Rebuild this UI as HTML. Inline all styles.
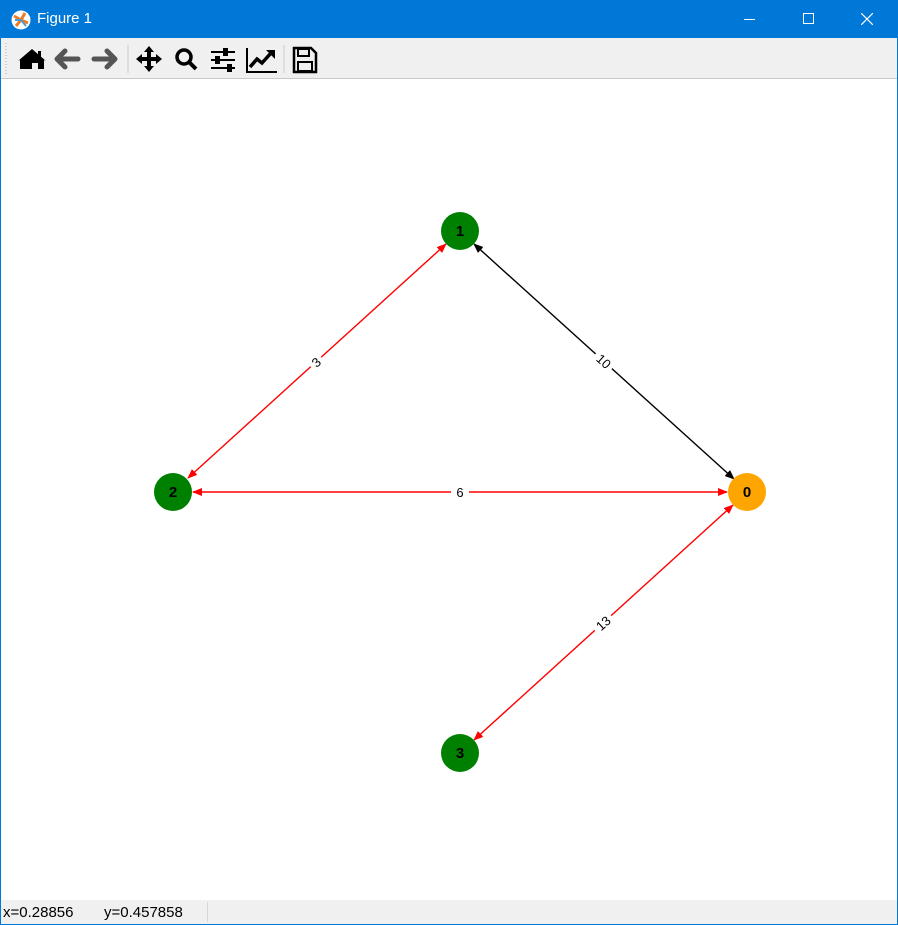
<!DOCTYPE html>
<html><head><style>
body{margin:0;width:898px;height:925px;overflow:hidden;font-family:"Liberation Sans","DejaVu Sans",sans-serif;}
.win{position:absolute;left:0;top:0;width:896px;height:923px;border:1px solid #0078d7;background:#fff;}
.title{position:absolute;left:0;top:0;width:896px;height:37px;background:#0078d7;color:#fff;font-size:15px;}
.tb{position:absolute;left:0;top:37px;width:896px;height:40px;background:#f0f0f0;border-bottom:1px solid #c8c8c8;}
.sb{position:absolute;left:0;top:899px;width:896px;height:24px;background:#f0f0f0;font-size:15px;}
</style></head><body>
<div class="win">
<div class="title">
<svg style="position:absolute;left:10px;top:9px" width="20" height="20" viewBox="0 0 20 20"><circle cx="10" cy="10" r="9.5" fill="#fff"/><path d="M10 10L3 6M10 10L5 16M10 10L14 3M10 10L17 13" stroke="#e87d2a" stroke-width="3"/><path d="M10 10L15 16M10 10L4 10" stroke="#4a9bd4" stroke-width="2"/></svg>
<span style="position:absolute;left:36px;top:9px">Figure 1</span>
<div style="position:absolute;left:743px;top:18px;width:11px;height:1px;background:#fff"></div>
<div style="position:absolute;left:802px;top:12px;width:9px;height:9px;border:1px solid #fff"></div>
<svg style="position:absolute;left:860px;top:12px" width="12" height="12"><path d="M0 0L12 12M12 0L0 12" stroke="#fff" stroke-width="1.2"/></svg>
</div>
<div class="tb">
<svg width="330" height="40">
<path d="M5 5v32" stroke="#aaa" stroke-width="1" stroke-dasharray="1,2"/>
<path d="M19 31v-9l-2 1 14-12 14 12-2-1v9h-6v-6h-6v6z M37 13h3v6l-3-3z" fill="#000"/>
<path d="M64 13l-8 8 8 8M57 21h20" stroke="#555" stroke-width="5" fill="none" stroke-linecap="round" stroke-linejoin="round"/>
<path d="M106 13l8 8-8 8M113 21h-20" stroke="#555" stroke-width="5" fill="none" stroke-linecap="round" stroke-linejoin="round"/>
<path d="M127 7v28" stroke="#ccc"/>
<path d="M148 8l-5 6h3v5h-5v-3l-6 5 6 5v-3h5v5h-3l5 6 5-6h-3v-5h5v3l6-5-6-5v3h-5v-5h3z" fill="#000"/>
<circle cx="183" cy="19" r="7" fill="none" stroke="#000" stroke-width="3.5"/><path d="M188 24l7 7" stroke="#000" stroke-width="4"/>
<path d="M210 14h24M210 22h24M210 30h24" stroke="#000" stroke-width="2"/><rect x="222" y="10" width="5" height="8" fill="#000"/><rect x="214" y="18" width="5" height="8" fill="#000"/><rect x="226" y="26" width="5" height="8" fill="#000"/>
<path d="M246 10v24h30" stroke="#000" stroke-width="2" fill="none"/><path d="M249 29l7-8 5 4 9-10" stroke="#000" stroke-width="3.5" fill="none"/><path d="M265 12h9v9z" fill="#000"/>
<path d="M283 7v28" stroke="#ccc"/>
<path d="M293 10h17l5 5v19h-22z" fill="none" stroke="#000" stroke-width="2.5"/><rect x="297" y="11" width="11" height="7" fill="none" stroke="#000" stroke-width="2"/><rect x="297" y="24" width="14" height="9" fill="none" stroke="#000" stroke-width="2"/>
</svg>
</div>
<svg style="position:absolute;left:-1px;top:-1px" width="898" height="900">
<defs>
<marker id="r" markerWidth="10" markerHeight="8" refX="9" refY="4" orient="auto-start-reverse" markerUnits="userSpaceOnUse"><path d="M0 0L10 4L0 8z" fill="red"/></marker>
<marker id="k" markerWidth="10" markerHeight="8" refX="9" refY="4" orient="auto-start-reverse" markerUnits="userSpaceOnUse"><path d="M0 0L10 4L0 8z" fill="#000"/></marker>
</defs>
<g stroke-width="1.4" fill="none">
<path d="M188 478L446 244" stroke="red" marker-start="url(#r)" marker-end="url(#r)"/>
<path d="M474 244L734 479" stroke="#000" marker-start="url(#k)" marker-end="url(#k)"/>
<path d="M193 492L727 492" stroke="red" marker-start="url(#r)" marker-end="url(#r)"/>
<path d="M474 740L733 505" stroke="red" marker-start="url(#r)" marker-end="url(#r)"/>
</g>
<g font-size="13" fill="#000" text-anchor="middle">
<g transform="translate(316,362) rotate(-42)"><rect x="-7" y="-9" width="14" height="17" fill="#fff"/><text y="5">3</text></g>
<g transform="translate(604,361) rotate(42)"><rect x="-11" y="-9" width="22" height="17" fill="#fff"/><text y="5">10</text></g>
<g transform="translate(460,492)"><rect x="-9" y="-9" width="18" height="17" fill="#fff"/><text y="5">6</text></g>
<g transform="translate(603,623) rotate(-42)"><rect x="-11" y="-9" width="22" height="17" fill="#fff"/><text y="5">13</text></g>
</g>
<g font-size="15" font-weight="bold" text-anchor="middle">
<circle cx="460" cy="231" r="19" fill="green"/><text x="460" y="236">1</text>
<circle cx="173" cy="492" r="19" fill="green"/><text x="173" y="497">2</text>
<circle cx="747" cy="492" r="19" fill="orange"/><text x="747" y="497">0</text>
<circle cx="460" cy="753" r="19" fill="green"/><text x="460" y="758">3</text>
</g>
</svg>
<div class="sb">
<span style="position:absolute;left:2px;top:4px">x=0.28856</span>
<span style="position:absolute;left:103px;top:4px">y=0.457858</span>
<div style="position:absolute;left:206px;top:2px;width:1px;height:20px;background:#d8d8d8"></div>
</div>
</div>
</body></html>
